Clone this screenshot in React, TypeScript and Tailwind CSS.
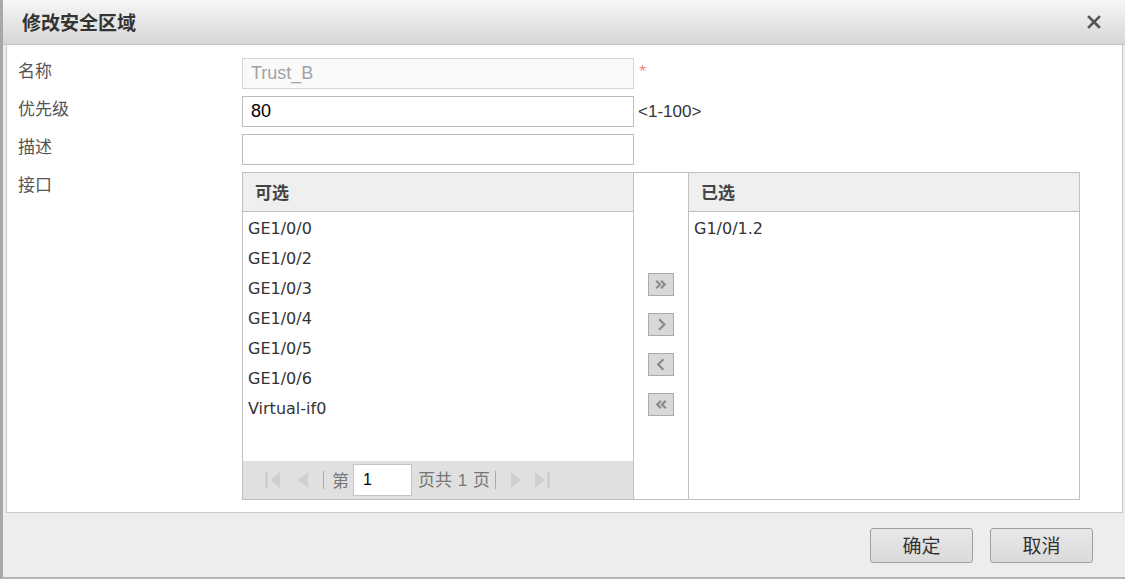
import React from "react";

const AVAILABLE = ["GE1/0/0", "GE1/0/2", "GE1/0/3", "GE1/0/4", "GE1/0/5", "GE1/0/6", "Virtual-if0"];
const SELECTED = ["G1/0/1.2"];

const cjk = "font-['Noto_Sans_CJK_SC',sans-serif]";
const latin = "font-['Liberation_Sans','Noto_Sans_CJK_SC',sans-serif]";
const listFont = "font-['DejaVu_Sans','Noto_Sans_CJK_SC',sans-serif]";

function MoveButton({ kind }: { kind: "allRight" | "right" | "left" | "allLeft" }) {
    const paths: Record<string, string> = {
        allRight: "M7 7l4 4-4 4M12 7l4 4-4 4",
        right: "M10 5.5l5.5 5.5-5.5 5.5",
        left: "M14.5 5.5L9 11l5.5 5.5",
        allLeft: "M12 7l-4 4 4 4M17 7l-4 4 4 4",
    };
    return (
        <button className="w-[26px] h-[23px] flex items-center justify-center bg-[#d8d8d8] border border-[#ababab]">
            <svg width="24" height="21" viewBox="0 0 24 22" fill="none" stroke="#888" strokeWidth="2.2">
                <path d={paths[kind]} />
            </svg>
        </button>
    );
}

function PagerIcon({ kind }: { kind: "first" | "prev" | "next" | "last" }) {
    return (
        <svg width="20" height="20" viewBox="0 0 20 20" fill="#cfcfcf">
            {kind === "first" && (
                <>
                    <rect x="2" y="2" width="3" height="16" />
                    <path d="M17 2L7 10l10 8z" />
                </>
            )}
            {kind === "prev" && <path d="M15 2L5 10l10 8z" />}
            {kind === "next" && <path d="M5 2l10 8-10 8z" />}
            {kind === "last" && (
                <>
                    <path d="M3 2l10 8-10 8z" />
                    <rect x="15" y="2" width="3" height="16" />
                </>
            )}
        </svg>
    );
}

export default function App() {
    return (
        <div className="w-[1125px] h-[579px] flex flex-col bg-[#ededed] border-l-[3px] border-l-[#a8a8a8] border-b-2 border-b-[#b5b5b5] overflow-hidden">
            {/* Header */}
            <div className="h-[45px] shrink-0 flex items-center justify-between pl-[19px] pr-[24px] bg-gradient-to-b from-[#f6f6f6] to-[#d7d7d7] border-b border-[#c4c4c4]">
                <span className={`${cjk} text-[19px] font-bold text-[#333]`}>修改安全区域</span>
                <svg width="14" height="14" viewBox="0 0 14 14" stroke="#555" strokeWidth="2.6" strokeLinecap="square">
                    <path d="M2 2l10 10M12 2L2 12" />
                </svg>
            </div>

            {/* Body */}
            <div className="pl-[3px] pr-[2px]">
                <div className="h-[468px] bg-white border border-t-0 border-[#c8c8c8] pt-[13px] pl-[11px]">
                    <div className="grid grid-cols-[224px_1fr] gap-y-[7px]">
                        <div className={`${cjk} text-[17px] leading-[24px] text-[#555]`}>名称</div>
                        <div className="flex items-start">
                            <div className={`${latin} w-[392px] h-[31px] border border-[#d6d6d6] bg-[#fafafa] px-[8px] flex items-center text-[18px] text-[#a3a3a3]`}>
                                Trust_B
                            </div>
                            <span className="text-[#f08080] text-[13px] ml-[5px] mt-[3px]">*</span>
                        </div>

                        <div className={`${cjk} text-[17px] leading-[24px] text-[#555]`}>优先级</div>
                        <div className="flex items-center">
                            <div className={`${latin} w-[392px] h-[31px] border border-[#bdbdbd] bg-white px-[8px] flex items-center text-[18px] text-black`}>
                                80
                            </div>
                            <span className={`${latin} text-[17px] text-[#333] ml-[4px]`}>&lt;1-100&gt;</span>
                        </div>

                        <div className={`${cjk} text-[17px] leading-[24px] text-[#555]`}>描述</div>
                        <div className="w-[392px] h-[31px] border border-[#bdbdbd] bg-white" />

                        <div className={`${cjk} text-[17px] leading-[24px] text-[#555]`}>接口</div>
                        <div className="flex w-[838px] h-[328px] border border-[#c0c0c0]">
                            {/* Available */}
                            <div className="w-[390px] flex flex-col">
                                <div className={`${cjk} h-[39px] shrink-0 bg-[#efefef] border-b border-[#c0c0c0] pl-[12px] flex items-center text-[17px] font-bold text-[#444]`}>
                                    可选
                                </div>
                                <div className={`${listFont} flex-1 pt-[2px] pl-[5px] text-[16px] text-[#333]`}>
                                    {AVAILABLE.map((item) => (
                                        <div key={item} className="h-[30px] flex items-center">
                                            {item}
                                        </div>
                                    ))}
                                </div>
                                <div className={`${cjk} h-[38px] shrink-0 bg-[#e0e0e0] flex items-center pl-[20px] text-[17px] text-[#777]`}>
                                    <PagerIcon kind="first" />
                                    <span className="ml-[10px]"><PagerIcon kind="prev" /></span>
                                    <span className="ml-[10px] w-px h-[18px] bg-[#aaa]" />
                                    <span className="ml-[8px]">第</span>
                                    <div className={`${latin} ml-[4px] w-[59px] h-[32px] bg-white border border-[#c4c4c4] flex items-center pl-[9px] text-[16px] text-black`}>
                                        1
                                    </div>
                                    <span className="ml-[6px]">页共 <span className={`${latin} mx-[2px]`}>1</span> 页</span>
                                    <span className="ml-[5px] w-px h-[18px] bg-[#aaa]" />
                                    <span className="ml-[10px]"><PagerIcon kind="next" /></span>
                                    <span className="ml-[6px]"><PagerIcon kind="last" /></span>
                                </div>
                            </div>

                            {/* Move buttons */}
                            <div className="w-[56px] border-x border-[#c0c0c0] flex flex-col items-center pt-[100px] gap-[17px]">
                                <MoveButton kind="allRight" />
                                <MoveButton kind="right" />
                                <MoveButton kind="left" />
                                <MoveButton kind="allLeft" />
                            </div>

                            {/* Selected */}
                            <div className="flex-1 flex flex-col">
                                <div className={`${cjk} h-[39px] shrink-0 bg-[#efefef] border-b border-[#c0c0c0] pl-[12px] flex items-center text-[17px] font-bold text-[#444]`}>
                                    已选
                                </div>
                                <div className={`${listFont} flex-1 pt-[2px] pl-[5px] text-[16px] text-[#333]`}>
                                    {SELECTED.map((item) => (
                                        <div key={item} className="h-[30px] flex items-center">
                                            {item}
                                        </div>
                                    ))}
                                </div>
                            </div>
                        </div>
                    </div>
                </div>
            </div>

            {/* Footer */}
            <div className="flex-1 flex items-center justify-end gap-[17px] pr-[32px]">
                <button className={`${cjk} w-[103px] h-[35px] rounded-[3px] border border-[#a0a0a0] bg-gradient-to-b from-[#e8e8e8] to-[#dadada] text-[19px] text-[#333]`}>
                    确定
                </button>
                <button className={`${cjk} w-[103px] h-[35px] rounded-[3px] border border-[#a0a0a0] bg-gradient-to-b from-[#e8e8e8] to-[#dadada] text-[19px] text-[#333]`}>
                    取消
                </button>
            </div>
        </div>
    );
}
